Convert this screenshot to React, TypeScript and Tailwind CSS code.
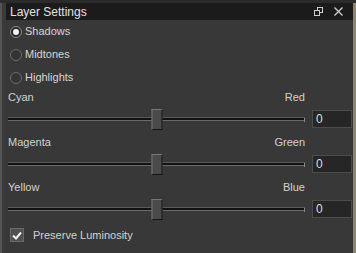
import React from 'react';

const font = { fontFamily: '"Liberation Sans", Arial, sans-serif' };

const Radio: React.FC<{ label: string; checked?: boolean }> = ({ label, checked }) => (
  <div className="flex items-center h-[23px] pl-[4px]">
    <span
      className={
        checked
          ? 'w-[12px] h-[12px] rounded-full border-[1.5px] border-[#8a8a8a] bg-[#2a2a2a] flex items-center justify-center'
          : 'w-[12px] h-[12px] rounded-full border-[1.5px] border-[#6c6c6c] bg-[#343434]'
      }
    >
      {checked && <span className="w-[6px] h-[6px] rounded-full bg-[#f4f4f4]" />}
    </span>
    <span className="ml-[3px] text-[11px] text-[#d6d6d6]">{label}</span>
  </div>
);

const SliderGroup: React.FC<{ left: string; right: string }> = ({ left, right }) => (
  <div className="grid grid-cols-[1fr_40px] gap-x-[7px]">
    <div className="flex justify-between items-center h-[16px] text-[11px] text-[#d2d2d2]">
      <span>{left}</span>
      <span>{right}</span>
    </div>
    <div />
    <div className="relative h-[18px] mt-[5px] flex items-center">
      <div className="w-full h-[4px] border-t border-t-[#5a5a5a] border-b border-b-[#6a6a6a] bg-[#121212]" />
      <div className="absolute right-0 top-[8px] w-px h-[4px] bg-[#8a8a8a]" />
      <div className="absolute left-1/2 -translate-x-1/2 top-[-1px] w-[11px] h-[21px] bg-[#4a4a4a] border border-t-[#777] border-l-[#777] border-r-[#151515] border-b-[#151515]" />
    </div>
    <div className="mt-[5px] h-[18px] bg-[#262626] border border-[#4c4c4c] flex items-center pl-[3px] text-[12px] text-[#dcdcdc]">0</div>
  </div>
);

export default function App() {
  return (
    <div className="w-[356px] h-[253px] bg-[#2b2b2b] pt-[3px] flex overflow-hidden" style={font}>
      <div className="w-[2px] bg-[#555555]" />
      <div className="w-[4px] bg-[#3a3a3a]" />
      <div className="flex-1 flex flex-col bg-[#383838]">
        <div className="h-[17px] bg-[#1b1b1b] flex items-center pl-[4px] pr-[10px]">
          <span className="text-[12px] text-[#e2e2e2]">Layer Settings</span>
          <div className="ml-auto flex items-center gap-[11px]">
            <svg width="9" height="9" viewBox="0 0 9 9" fill="none" stroke="#cfcfcf" strokeWidth="1">
              <rect x="3.5" y="0.5" width="5" height="5" />
              <rect x="0.5" y="3.5" width="5" height="5" fill="#1b1b1b" />
            </svg>
            <svg width="9" height="9" viewBox="0 0 9 9" stroke="#cfcfcf" strokeWidth="1.3">
              <path d="M0.5 0.5 L8.5 8.5 M8.5 0.5 L0.5 8.5" />
            </svg>
          </div>
        </div>
        <div className="flex flex-col">
          <Radio label="Shadows" checked />
          <Radio label="Midtones" />
          <Radio label="Highlights" />
        </div>
        <div className="flex flex-col gap-[6px] pl-[2px] pr-[1px]">
          <SliderGroup left="Cyan" right="Red" />
          <SliderGroup left="Magenta" right="Green" />
          <SliderGroup left="Yellow" right="Blue" />
        </div>
        <div className="flex items-center h-[16px] mt-[9px] pl-[4px]">
          <span className="w-[14px] h-[14px] bg-[#505050] border border-[#6a6a6a] flex items-center justify-center">
            <svg width="10" height="9" viewBox="0 0 10 9" fill="none" stroke="#f2f2f2" strokeWidth="2">
              <path d="M1 4.5 L4 7.5 L9 1.5" />
            </svg>
          </span>
          <span className="ml-[9px] text-[11px] text-[#d2d2d2]">Preserve Luminosity</span>
        </div>
      </div>
      <div className="w-[3px] bg-[#8b8672]" />
    </div>
  );
}
